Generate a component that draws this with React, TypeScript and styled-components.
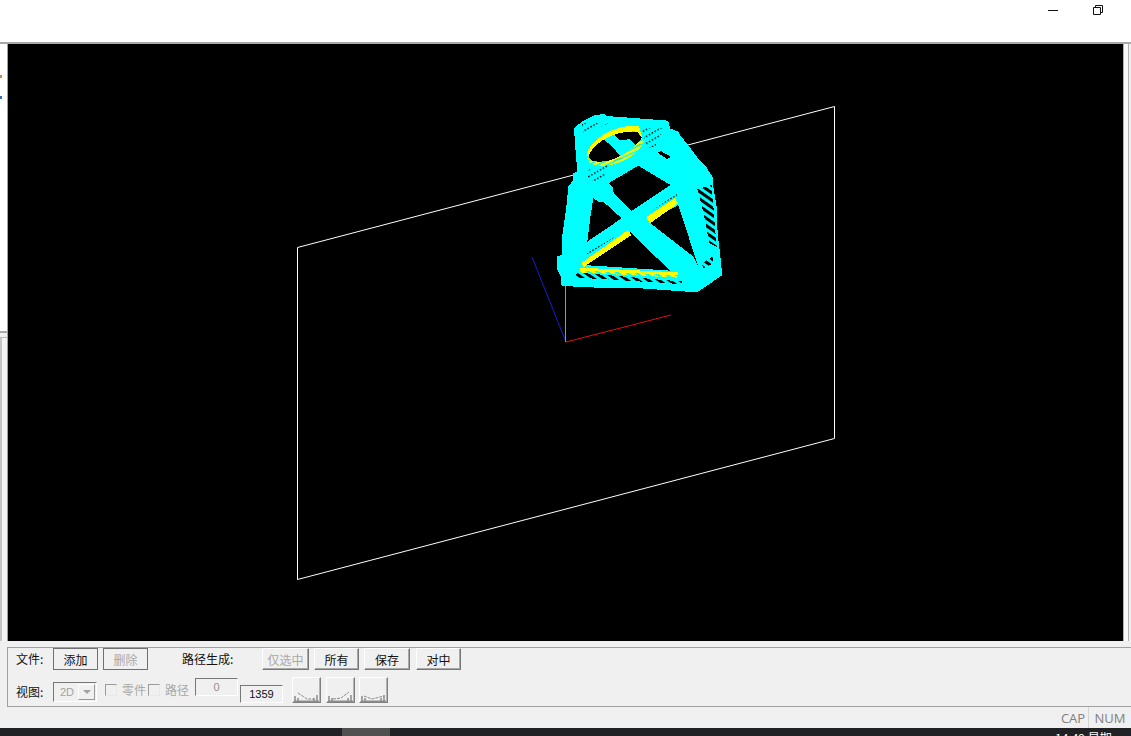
import { FC } from 'react'
import styled, { createGlobalStyle } from 'styled-components'

const GlobalStyle = createGlobalStyle`
  html, body {
    margin: 0;
    padding: 0;
    background: #f0f0f0;
  }
  body {
    font-family: 'Noto Sans CJK SC', 'Liberation Sans', sans-serif;
    font-size: 12px;
    color: #111;
  }
`

const StyledWindow = styled.div`
  width: 1131px;
  height: 736px;
  display: flex;
  flex-direction: column;
  overflow: hidden;
`

const StyledTitleBar = styled.div`
  height: 42px;
  background: #fff;
  display: flex;
  justify-content: flex-end;
  gap: 35px;
  padding: 5px 28px 0 0;
  box-sizing: border-box;
`

const StyledMain = styled.div`
  height: 599px;
  display: flex;
  background: #f0f0f0;
  border-top: 2px solid #a8a8a8;
  box-sizing: border-box;
`

const StyledLeftRail = styled.div`
  width: 8px;
  display: flex;
  flex-direction: column;
  border-right: 1px solid #a0a0a0;
  box-sizing: border-box;
`

const StyledRailPane = styled.div`
  height: 287px;
  background: #fff;
  border-bottom: 2px solid #a8a8a8;
  position: relative;
`

const StyledRailSpeck = styled.span<{ $top: number; $color: string }>`
  position: absolute;
  left: 0;
  top: ${(p) => p.$top}px;
  width: 2px;
  height: 3px;
  background: ${(p) => p.$color};
`

const StyledRailLower = styled.div`
  flex: 1;
  margin-top: 4px;
  border-top: 1px solid #b8b8b8;
  background: linear-gradient(to right, #c4c4c4 0, #c4c4c4 2px, #f4f4f4 2px);
`

const StyledCanvas = styled.svg`
  width: 1115px;
  height: 597px;
  display: block;
  background: #000;
`

const StyledRightRail = styled.div`
  flex: 1;
  height: 597px;
  background: #f8f8f8;
  border-left: 1px solid #b0b0b0;
  border-right: 1px solid #b0b0b0;
  margin-right: 2px;
`

const StyledPanel = styled.div`
  height: 60px;
  margin: 6px 0 0 7px;
  padding: 0 0 0 8px;
  box-sizing: border-box;
  border: 1px solid #a0a0a0;
  border-right: none;
  display: flex;
  flex-direction: column;
  gap: 7px;
`

const StyledRow = styled.div`
  display: flex;
  align-items: flex-start;
  height: 22px;
`

const StyledRowLabel = styled.span<{ $width: number; $left?: number; $top?: number }>`
  width: ${(p) => p.$width}px;
  margin-left: ${(p) => p.$left ?? 0}px;
  margin-top: ${(p) => p.$top ?? 0}px;
  line-height: 22px;
  white-space: nowrap;
  flex: none;
`

const StyledButton = styled.button<{ $width: number; $left?: number; $flat?: boolean }>`
  width: ${(p) => p.$width}px;
  margin-left: ${(p) => p.$left ?? 0}px;
  height: 22px;
  padding: 0;
  flex: none;
  font: inherit;
  color: ${(p) => (p.disabled ? '#a8a8a8' : '#111')};
  background: #f0f0f0;
  border: 1px solid;
  border-color: ${(p) => (p.$flat ? '#707070' : '#fff #777 #777 #fff')};
  box-shadow: ${(p) => (p.$flat ? 'none' : 'inset -1px -1px 0 #a8a8a8')};
`

const StyledCombo = styled.div`
  width: 44px;
  height: 20px;
  margin-top: 5px;
  box-sizing: border-box;
  border: 1px solid;
  border-color: #777 #fff #fff #777;
  display: flex;
  align-items: center;
  justify-content: space-between;
  padding: 0 1px 0 6px;
  color: #a0a0a0;
  font-family: 'Liberation Sans', sans-serif;
  font-size: 11px;
`

const StyledComboArrow = styled.span`
  width: 17px;
  height: 16px;
  box-sizing: border-box;
  background: #f0f0f0;
  border: 1px solid;
  border-color: #fff #999 #999 #fff;
  display: flex;
  align-items: center;
  justify-content: center;

  &:before {
    content: '';
    border-left: 4px solid transparent;
    border-right: 4px solid transparent;
    border-top: 4px solid #a0a0a0;
  }
`

const StyledCheck = styled.span<{ $left: number }>`
  width: 12px;
  height: 12px;
  margin: 7px 0 0 ${(p) => p.$left}px;
  box-sizing: border-box;
  border: 1px solid;
  border-color: #9a9a9a #e8e8e8 #e8e8e8 #9a9a9a;
  flex: none;
`

const StyledCheckLabel = styled.span<{ $width: number; $left: number }>`
  width: ${(p) => p.$width}px;
  margin: 2px 0 0 ${(p) => p.$left}px;
  line-height: 22px;
  color: #a8a8a8;
  flex: none;
`

const StyledField = styled.div<{ $left: number; $width: number; $height: number; $top: number; $off?: boolean }>`
  width: ${(p) => p.$width}px;
  height: ${(p) => p.$height}px;
  margin: ${(p) => p.$top}px 0 0 ${(p) => p.$left}px;
  box-sizing: border-box;
  flex: none;
  border: 1px solid;
  border-color: #777 #fff #fff #777;
  text-align: center;
  line-height: ${(p) => p.$height - 2}px;
  font-family: 'Liberation Sans', sans-serif;
  font-size: 11px;
  color: ${(p) => (p.$off ? '#909090' : '#111')};
`

const StyledChartButton = styled.div<{ $left: number }>`
  width: 29px;
  height: 26px;
  margin: 0 0 0 ${(p) => p.$left}px;
  box-sizing: border-box;
  flex: none;
  border: 1px solid;
  border-color: #fff #808080 #808080 #fff;
  box-shadow: inset -1px -1px 0 #b4b4b4;
  display: flex;
  align-items: flex-end;
`

const StyledStatusBar = styled.div`
  height: 21px;
  display: flex;
  justify-content: flex-end;
  font-family: 'Open Sans', 'Liberation Sans', sans-serif;
  font-size: 13px;
  color: #808080;
  background: #f0f0f0;
`

const StyledStatusCell = styled.span<{ $width: number; $sep?: boolean }>`
  width: ${(p) => p.$width}px;
  box-sizing: border-box;
  text-align: center;
  line-height: 23px;
  border-right: ${(p) => (p.$sep ? '1px solid #d4d4d4' : 'none')};
`

const StyledTaskbar = styled.div`
  flex: 1;
  background: #202124;
  display: flex;
  overflow: hidden;
  position: relative;
`

const StyledTaskItem = styled.div`
  width: 48px;
  margin-left: 342px;
  background: #505050;
`

const StyledClock = styled.span`
  position: absolute;
  left: 1055px;
  top: 2px;
  color: #fff;
  font-size: 12px;
  line-height: 16px;
  white-space: nowrap;
`

// traced from the screenshot, in 3x crop units starting at (540,100)
const outline =
  '165,45 195,42 200,48 385,62 390,85 415,95 420,105 440,130 470,170 495,195 520,235 518,250 530,320 533,400 540,460 547,525 490,565 470,577 300,565 170,563 65,558 62,530 50,505 50,470 65,465 65,420 78,330 85,260 100,240 100,220 112,215 105,130 102,85 125,65'
const holes = [
  '295,197 392,255 275,333 222,282 218,262 205,250',
  '160,295 175,305 190,305 245,355 142,425 152,345',
  '415,315 475,500 460,470 325,365',
  '270,395 130,495 390,512',
  '145,168 165,130 185,112 222,145 248,178 190,188 155,182',
  '215,97 292,95 305,112 300,145 268,118 238,120',
  '352,158 362,153 392,170 382,178',
]
const yellow = [
  '125,488 264,390 274,405 130,502',
  '318,352 405,294 414,310 330,370',
  '120,503 415,517 412,533 120,518',
]

const Part: FC = () => (
  <g transform="translate(540 100) scale(0.3333)" shapeRendering="crispEdges">
    <polygon points={outline} fill="#00ffff" />
    {holes.map((pts) => (
      <polygon key={pts} points={pts} fill="#000" />
    ))}
    {yellow.map((pts) => (
      <polygon key={pts} points={pts} fill="#ffff00" />
    ))}
    <path d="M138,168 C150,115 225,72 297,77 L306,112 L292,95 C240,90 170,115 145,168 Z" fill="#ffff00" />
    <path d="M140,170 L155,182 C190,192 250,180 305,115 L312,125 C290,175 205,215 148,190 Z" fill="url(#ringHatch)" />
    <polygon points="120,512 415,526 412,533 120,518" fill="url(#cyanHatch)" />
    <polygon points="100,532 115,518 430,545 420,552" fill="url(#blackHatch)" />
    <polygon points="472,268 515,255 530,440 508,430 490,335" fill="url(#blackHatch)" />
    <polygon points="485,490 518,470 520,490 490,505" fill="url(#blackHatch)" />
    <polygon points="140,460 260,378 264,384 145,465" fill="url(#dots)" />
    <polygon points="315,345 410,282 414,290 320,352" fill="url(#dots)" />
    <polygon points="140,210 205,195 190,240 145,245" fill="url(#dots)" />
    <polygon points="305,85 370,85 345,140 320,145" fill="url(#dots)" />
    <polygon points="125,70 205,68 205,72 130,100" fill="url(#dots)" />
  </g>
)

const Scene: FC = () => (
  <StyledCanvas viewBox="8 44 1115 597">
    <defs>
      <pattern id="blackHatch" width="18" height="18" patternUnits="userSpaceOnUse" patternTransform="rotate(35)">
        <rect width="18" height="9" fill="#000" />
      </pattern>
      <pattern id="cyanHatch" width="16" height="16" patternUnits="userSpaceOnUse" patternTransform="rotate(35)">
        <rect width="16" height="7" fill="#00ffff" />
      </pattern>
      <pattern id="ringHatch" width="12" height="12" patternUnits="userSpaceOnUse" patternTransform="rotate(-25)">
        <rect width="12" height="8" fill="#ffff00" />
        <rect y="8" width="12" height="4" fill="#00ffff" />
      </pattern>
      <pattern id="dots" width="10" height="18" patternUnits="userSpaceOnUse" patternTransform="rotate(-30)">
        <rect width="5" height="4" fill="#000" />
      </pattern>
    </defs>
    <polygon points="297.5,247.5 834.5,106.5 834.5,438.5 297.5,579.5" fill="none" stroke="#fff" strokeWidth="1" />
    <line x1="566" y1="342" x2="671" y2="315" stroke="#e01010" />
    <line x1="566" y1="342" x2="532" y2="257" stroke="#1020d0" />
    <line x1="565.5" y1="342" x2="565.5" y2="270" stroke="#30e030" />
    <Part />
  </StyledCanvas>
)

const ChartIcon: FC<{ d: string }> = ({ d }) => (
  <svg width="27" height="14" viewBox="0 0 27 14">
    <path d={d} fill="none" stroke="#8c8c8c" strokeWidth="1" strokeDasharray="3 1" />
    <path d="M1,13.5H26" stroke="#8c8c8c" strokeWidth="2" />
    <path d="M2,13V8M5,13V10M24,13V7M21,13V10" stroke="#8c8c8c" strokeWidth="1.5" />
  </svg>
)

const App: FC = () => (
  <StyledWindow>
    <GlobalStyle />
    <StyledTitleBar>
      <svg width="10" height="10" viewBox="0 0 10 10">
        <path d="M0,5.5H10" stroke="#111" />
      </svg>
      <svg width="10" height="10" viewBox="0 0 10 10">
        <path d="M0.5,2.5H7.5V9.5H0.5ZM2.5,2.5V0.5H9.5V7.5H7.5" fill="none" stroke="#111" />
      </svg>
    </StyledTitleBar>

    <StyledMain>
      <StyledLeftRail>
        <StyledRailPane>
          <StyledRailSpeck $top={31} $color="#c98a4a" />
          <StyledRailSpeck $top={52} $color="#3a6fb0" />
        </StyledRailPane>
        <StyledRailLower />
      </StyledLeftRail>
      <Scene />
      <StyledRightRail />
    </StyledMain>

    <StyledPanel>
      <StyledRow>
        <StyledRowLabel $width={37}>文件:</StyledRowLabel>
        <StyledButton $width={45} $flat>添加</StyledButton>
        <StyledButton $width={45} $left={5} $flat disabled>删除</StyledButton>
        <StyledRowLabel $width={80} $left={34}>路径生成:</StyledRowLabel>
        <StyledButton $width={47} disabled>仅选中</StyledButton>
        <StyledButton $width={45} $left={5}>所有</StyledButton>
        <StyledButton $width={46} $left={5}>保存</StyledButton>
        <StyledButton $width={45} $left={6}>对中</StyledButton>
      </StyledRow>
      <StyledRow>
        <StyledRowLabel $width={37} $top={4}>视图:</StyledRowLabel>
        <StyledCombo>
          2D
          <StyledComboArrow />
        </StyledCombo>
        <StyledCheck $left={8} />
        <StyledCheckLabel $width={26} $left={5}>零件</StyledCheckLabel>
        <StyledCheck $left={0} />
        <StyledCheckLabel $width={26} $left={5}>路径</StyledCheckLabel>
        <StyledField $left={4} $width={43} $height={18} $top={1} $off>0</StyledField>
        <StyledField $left={2} $width={43} $height={18} $top={8}>1359</StyledField>
        <StyledChartButton $left={9}>
          <ChartIcon d="M5,5 L14,11 L21,11" />
        </StyledChartButton>
        <StyledChartButton $left={5}>
          <ChartIcon d="M6,11 L14,10 L22,4" />
        </StyledChartButton>
        <StyledChartButton $left={4}>
          <ChartIcon d="M4,8 L12,11 L24,8" />
        </StyledChartButton>
      </StyledRow>
    </StyledPanel>

    <StyledStatusBar>
      <StyledStatusCell $width={31} $sep>CAP</StyledStatusCell>
      <StyledStatusCell $width={42}>NUM</StyledStatusCell>
    </StyledStatusBar>

    <StyledTaskbar>
      <StyledTaskItem />
      <StyledClock>14:49 星期</StyledClock>
    </StyledTaskbar>
  </StyledWindow>
)

export default App
